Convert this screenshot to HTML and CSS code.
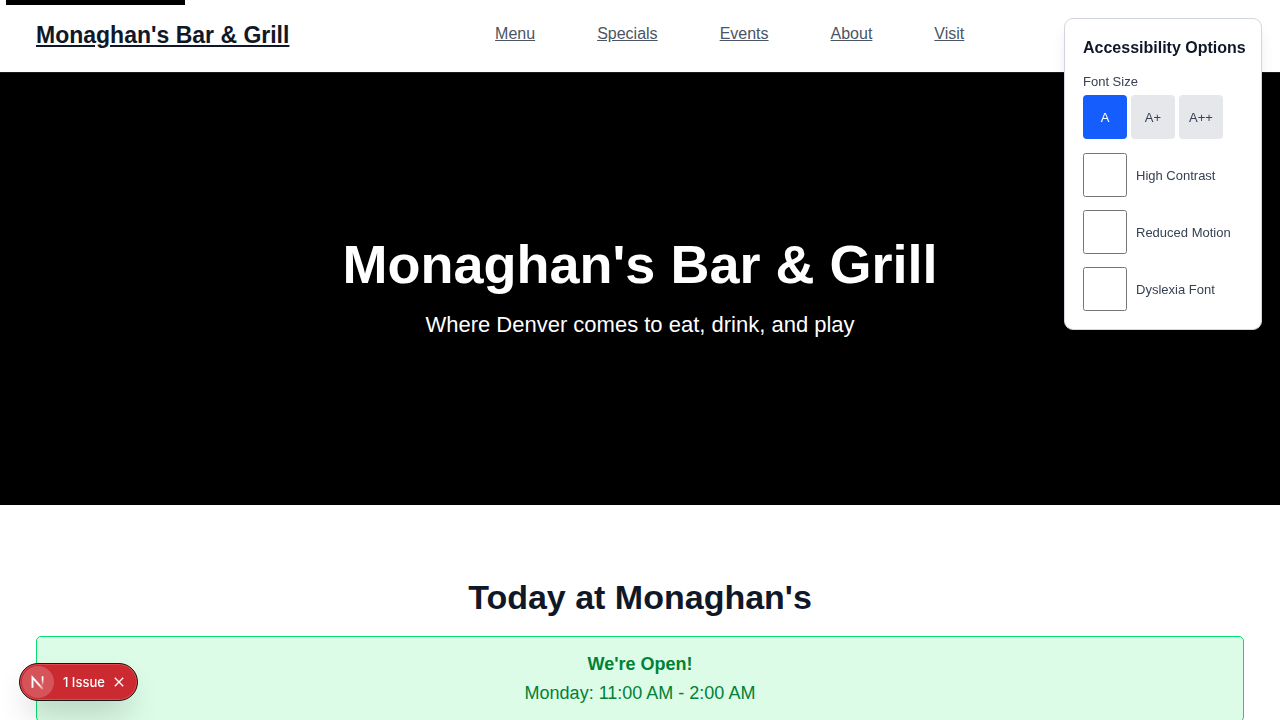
FILE: index.html
```html
<!DOCTYPE html>
<html lang="en">
<head>
<meta charset="utf-8">
<meta name="viewport" content="width=device-width, initial-scale=1">
<title>Monaghan's Bar &amp; Grill</title>
<link rel="stylesheet" href="styles.css">
</head>
<body>
<a class="skip-link" href="#main" aria-label="Skip to main content"></a>
<header class="site-header">
  <a class="brand" href="#">Monaghan's Bar &amp; Grill</a>
  <nav class="site-nav" aria-label="Main">
    <a href="#menu">Menu</a>
    <a href="#specials">Specials</a>
    <a href="#events">Events</a>
    <a href="#about">About</a>
    <a href="#visit">Visit</a>
  </nav>
</header>
<main id="main">
  <section class="hero">
    <h1 class="hero-title">Monaghan's Bar &amp; Grill</h1>
    <p class="hero-text">Where Denver comes to eat, drink, and play</p>
  </section>
  <section class="today">
    <h2 class="today-title">Today at Monaghan's</h2>
    <div class="status">
      <p class="status-title">We're Open!</p>
      <p>Monday: 11:00 AM - 2:00 AM</p>
    </div>
  </section>
</main>
<aside class="options" aria-labelledby="options-title">
  <h3 class="options-title" id="options-title">Accessibility Options</h3>
  <div class="size-field" role="group" aria-labelledby="size-label">
    <span class="size-label" id="size-label">Font Size</span>
    <div class="size-buttons">
      <button class="size-button is-active" type="button" aria-pressed="true">A</button>
      <button class="size-button" type="button" aria-pressed="false">A+</button>
      <button class="size-button" type="button" aria-pressed="false">A++</button>
    </div>
  </div>
  <div class="toggles">
    <label class="toggle"><input class="toggle-box" type="checkbox">High Contrast</label>
    <label class="toggle"><input class="toggle-box" type="checkbox">Reduced Motion</label>
    <label class="toggle"><input class="toggle-box" type="checkbox">Dyslexia Font</label>
  </div>
</aside>
<div class="issues">
  <button class="issues-logo" type="button" aria-label="Open dev tools">
    <svg width="32" height="32" viewBox="0 0 32 32" fill="none" aria-hidden="true">
      <defs>
        <linearGradient id="diagonal" x1="10" y1="10" x2="22" y2="23" gradientUnits="userSpaceOnUse">
          <stop offset="0.6" stop-color="#fff"/>
          <stop offset="1" stop-color="#fff" stop-opacity="0.2"/>
        </linearGradient>
        <linearGradient id="stem" x1="20" y1="10" x2="20" y2="20" gradientUnits="userSpaceOnUse">
          <stop offset="0.3" stop-color="#fff"/>
          <stop offset="1" stop-color="#fff" stop-opacity="0"/>
        </linearGradient>
      </defs>
      <path d="M10.5 21.8V11.4L20.8 23" stroke="url(#diagonal)" stroke-width="1.9"/>
      <path d="M20.6 10.2V20" stroke="url(#stem)" stroke-width="1.7"/>
    </svg>
  </button>
  <button class="issues-count" type="button">1 Issue</button>
  <button class="issues-close" type="button" aria-label="Dismiss">
    <svg width="10" height="10" viewBox="0 0 10 10" fill="none" aria-hidden="true">
      <path d="M0.8 0.8L9.2 9.2M9.2 0.8L0.8 9.2" stroke="#fff" stroke-width="1.3"/>
    </svg>
  </button>
</div>
</body>
</html>
```
FILE: styles.css
```css
* {
  box-sizing: border-box;
}

body {
  margin: 0;
  background: #fff;
  color: #101828;
  font-family: "Liberation Sans", Arial, sans-serif;
  font-size: 18px;
  line-height: 29px;
}

h1, h2, h3, p {
  margin: 0;
}

button {
  border: 0;
  padding: 0;
  font: inherit;
  cursor: pointer;
}

.skip-link {
  position: absolute;
  top: 0;
  left: 6px;
  width: 179px;
  height: 5px;
  background: #000;
}

.site-header {
  display: flex;
  align-items: flex-start;
  padding: 17px 110px 19px 36px;
  border-bottom: 1px solid #1a1a1a;
}

.brand {
  color: #101828;
  font-size: 23px;
  font-weight: 700;
  line-height: 36px;
}

.site-nav {
  display: flex;
  flex: 1;
  justify-content: center;
  gap: 62px;
  font-size: 16px;
  line-height: 34px;
}

.site-nav a {
  color: #4a5565;
}

.hero {
  display: flex;
  flex-direction: column;
  align-items: center;
  justify-content: center;
  gap: 18px;
  height: 60vh;
  background: #000;
  color: #fff;
  text-align: center;
}

.hero-title {
  font-size: 54px;
  line-height: 54px;
}

.hero-text {
  font-size: 22px;
  line-height: 32px;
}

.today {
  display: flex;
  flex-direction: column;
  gap: 18px;
  padding: 72px 36px;
  text-align: center;
}

.today-title {
  font-size: 34px;
  line-height: 41px;
}

.status {
  padding: 13px;
  border: 1px solid #05df72;
  border-radius: 5px;
  background: #dcfce7;
  color: #008236;
}

.status-title {
  font-weight: 700;
}

.options {
  position: fixed;
  top: 18px;
  right: 18px;
  display: flex;
  flex-direction: column;
  gap: 14px;
  width: 198px;
  padding: 18px;
  border: 1px solid #d1d5dc;
  border-radius: 9px;
  background: #fff;
  color: #364153;
  font-size: 13px;
  line-height: 19px;
  box-shadow: 0 10px 15px -3px rgba(0, 0, 0, 0.1), 0 4px 6px -4px rgba(0, 0, 0, 0.1);
}

.options-title {
  color: #101828;
  font-size: 16px;
  line-height: 21px;
  white-space: nowrap;
}

.size-field {
  display: flex;
  flex-direction: column;
  gap: 4px;
}

.size-buttons {
  display: flex;
  gap: 4px;
}

.size-button {
  width: 44px;
  height: 44px;
  border-radius: 4px;
  background: #e5e7eb;
  color: #364153;
}

.size-button.is-active {
  background: #155dfc;
  color: #fff;
}

.toggles {
  display: flex;
  flex-direction: column;
  gap: 13px;
}

.toggle {
  display: flex;
  align-items: center;
  gap: 9px;
}

.toggle-box {
  width: 44px;
  height: 44px;
  margin: 0;
}

.issues {
  position: fixed;
  bottom: 19px;
  left: 19px;
  display: flex;
  align-items: center;
  gap: 9px;
  height: 38px;
  padding: 0 13px 0 2px;
  border: 1px solid #171717;
  border-radius: 19px;
  background: #ca2a30;
  box-shadow: inset 0 0 0 1px #e5484d, 0 16px 32px -8px rgba(0, 0, 0, 0.24);
  color: #fff;
  font-family: Inter, sans-serif;
  font-size: 13px;
  font-weight: 500;
  line-height: 16px;
}

.issues button {
  background: none;
  color: inherit;
}

.issues .issues-logo {
  width: 32px;
  height: 32px;
  border-radius: 50%;
  background: rgba(255, 255, 255, 0.2);
}

.issues-logo svg,
.issues-close svg {
  display: block;
}

.issues-count {
  white-space: nowrap;
}
```
